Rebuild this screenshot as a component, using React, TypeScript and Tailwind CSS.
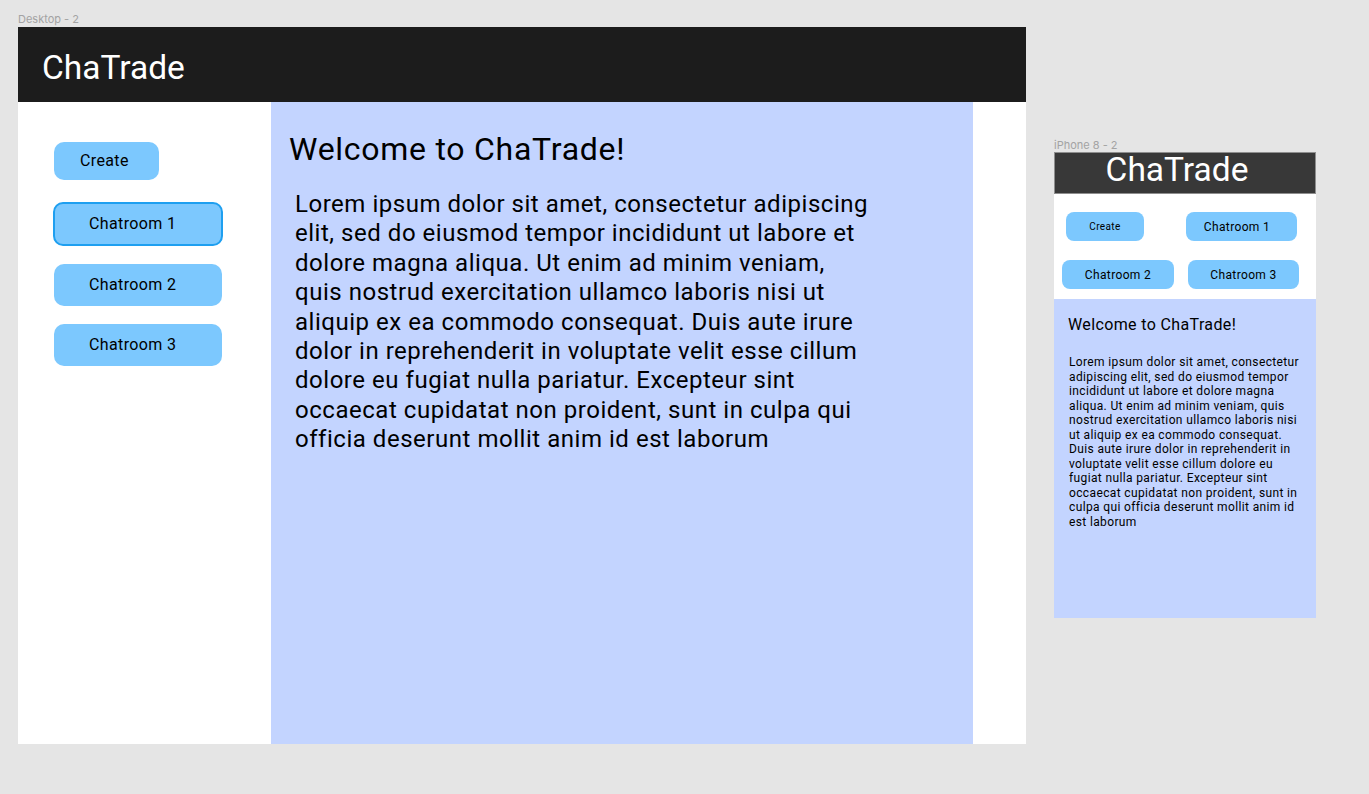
const roboto = { fontFamily: "Roboto, 'Liberation Sans', sans-serif" };

const DesktopFrame = () => {
  return (
    <div className="flex flex-col">
      <div className="text-[11px] leading-[14px] mb-[1px] text-[#a3a3a3] font-['Inter',sans-serif]">Desktop - 2</div>
      <div className="w-[1008px] h-[717px] bg-white flex flex-col font-['Roboto','Liberation_Sans',sans-serif] tracking-[0.023em]">
        <div className="h-[75px] bg-[#1c1c1c] pl-[24px] pt-[6px]">
          <h1 className="text-[33.5px] leading-[69px] tracking-normal text-white">ChaTrade</h1>
        </div>
        <div className="flex flex-1">
          <div className="w-[253px] pl-[36px] pt-[40px] flex flex-col items-start">
            <button className="w-[105px] h-[38px] rounded-[10px] bg-[#7cc8fe] text-[16px] text-black text-left pl-[26px]">
              Create
            </button>
            <button className="-ml-[1px] mt-[22px] w-[170px] h-[44px] rounded-[10px] bg-[#7cc8fe] border-2 border-[#1e9ff0] text-[16px] text-black text-left pl-[34px]">
              Chatroom 1
            </button>
            <button className="mt-[18px] w-[168px] h-[42px] rounded-[10px] bg-[#7cc8fe] text-[16px] text-black text-left pl-[35px]">
              Chatroom 2
            </button>
            <button className="mt-[18px] w-[168px] h-[42px] rounded-[10px] bg-[#7cc8fe] text-[16px] text-black text-left pl-[35px]">
              Chatroom 3
            </button>
          </div>
          <div className="w-[702px] bg-[#c3d4ff] pt-[28px] tracking-[0.53px]">
            <h2 className="pl-[18px] text-[32px] leading-[38px] tracking-[0.73px] text-black">Welcome to ChaTrade!</h2>
            <p className="ml-[24px] mt-[22px] w-[580px] text-[24px] leading-[29.4px] text-black">
              Lorem ipsum dolor sit amet, consectetur adipiscing elit, sed do eiusmod tempor incididunt ut labore et dolore magna aliqua. Ut enim ad minim veniam, quis nostrud exercitation ullamco laboris nisi ut aliquip ex ea commodo consequat. Duis aute irure dolor in reprehenderit in voluptate velit esse cillum dolore eu fugiat nulla pariatur. Excepteur sint occaecat cupidatat non proident, sunt in culpa qui officia deserunt mollit anim id est laborum
            </p>
          </div>
        </div>
      </div>
    </div>
  );
};

const PhoneFrame = () => {
  return (
    <div className="flex flex-col mt-[126px] ml-[28px]">
      <div className="text-[11px] leading-[14px] text-[#a3a3a3] font-['Inter',sans-serif]">iPhone 8 - 2</div>
      <div className="w-[262px] h-[466px] bg-white flex flex-col font-['Roboto','Liberation_Sans',sans-serif] tracking-[0.023em]">
        <div className="h-[42px] bg-[#383838] border border-[#8e8e8e] flex items-center justify-center pr-[16px] pb-[7px]">
          <h1 className="text-[33.5px] leading-[34px] tracking-normal text-white">ChaTrade</h1>
        </div>
        <div className="pt-[18px] pb-[10px] flex flex-col">
          <div className="flex">
            <button className="ml-[12px] w-[78px] h-[29px] rounded-[8px] bg-[#7cc8fe] text-[10px] text-black">Create</button>
            <button className="ml-[42px] w-[111px] h-[29px] rounded-[8px] bg-[#7cc8fe] text-[12px] text-black pr-[9px]">Chatroom 1</button>
          </div>
          <div className="flex mt-[19px]">
            <button className="ml-[8px] w-[112px] h-[29px] rounded-[8px] bg-[#7cc8fe] text-[12px] text-black">Chatroom 2</button>
            <button className="ml-[14px] w-[111px] h-[29px] rounded-[8px] bg-[#7cc8fe] text-[12px] text-black">Chatroom 3</button>
          </div>
        </div>
        <div className="flex-1 bg-[#c3d4ff] pt-[16px]">
          <h2 className="pl-[14px] text-[16px] leading-[19px] text-black">Welcome to ChaTrade!</h2>
          <p className="ml-[15px] mt-[21px] w-[234px] text-[12px] leading-[14.5px] text-black">
            Lorem ipsum dolor sit amet, consectetur adipiscing elit, sed do eiusmod tempor incididunt ut labore et dolore magna aliqua. Ut enim ad minim veniam, quis nostrud exercitation ullamco laboris nisi ut aliquip ex ea commodo consequat. Duis aute irure dolor in reprehenderit in voluptate velit esse cillum dolore eu fugiat nulla pariatur. Excepteur sint occaecat cupidatat non proident, sunt in culpa qui officia deserunt mollit anim id est laborum
          </p>
        </div>
      </div>
    </div>
  );
};

const App = () => {
  return (
    <div className="w-full min-h-[794px] bg-[#e5e5e5] flex items-start pl-[18px] pt-[12px]" style={roboto}>
      <DesktopFrame />
      <PhoneFrame />
    </div>
  );
};

export default App;
